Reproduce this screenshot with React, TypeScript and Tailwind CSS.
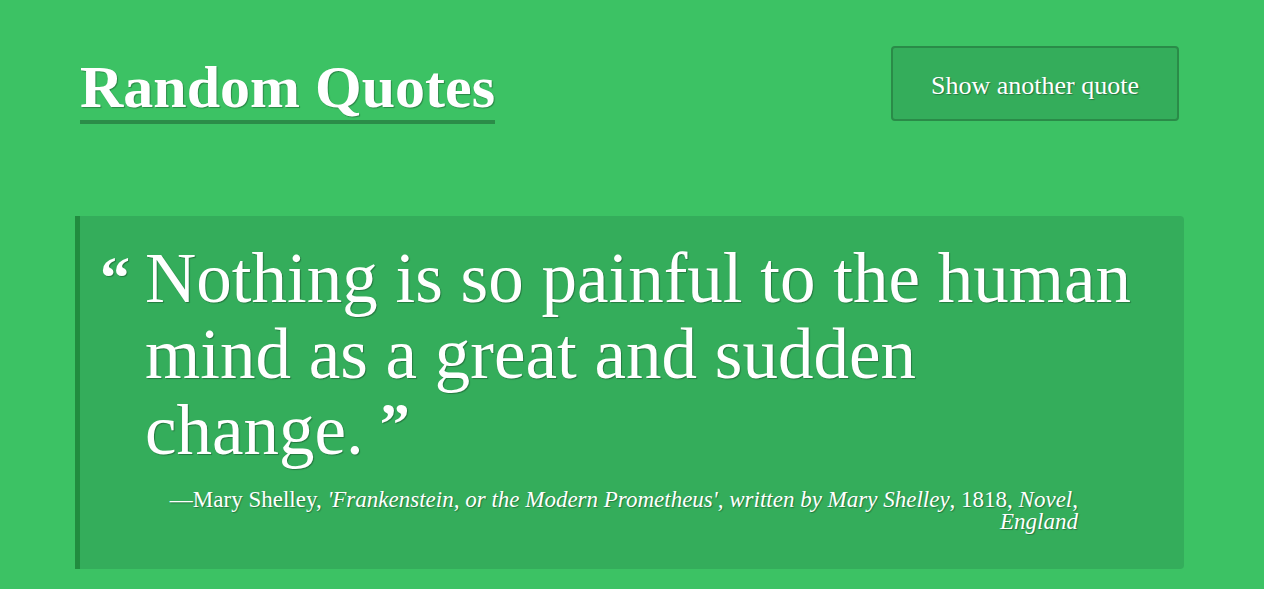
import React from 'react';

const serif = "font-['Liberation_Serif',serif]";
const shadow = '[text-shadow:1px_1px_1px_rgba(0,0,0,0.3)]';

export default function App() {
  return (
    <div className={`min-h-[589px] w-full bg-[#3cc264] text-white ${serif}`}>
      <div className="pl-[75px] pr-[80px] pt-[46px]">
        <header className="flex items-start justify-between">
          <h1
            className={`ml-[5px] mt-[8px] border-b-4 border-[#2b8c48] text-[60px] font-bold leading-[66px] ${shadow}`}
          >
            Random Quotes
          </h1>
          <button
            className={`mr-[5px] h-[75px] w-[288px] rounded border-2 border-[#2a8b48] bg-[#34ad5b] pt-[3px] text-[26px] ${shadow}`}
          >
            Show another quote
          </button>
        </header>

        <blockquote className="mt-[92px] rounded-r border-l-[5px] border-[#218c3f] bg-[#34ad5b] pb-[36px] pl-[20px] pr-[40px] pt-[24px]">
          <div className={`flex items-start ${shadow}`}>
            <span className="mt-[8px] w-[45px] shrink-0 text-[60px] font-bold leading-[60px]">“</span>
            <p className="text-[71px] leading-[76px]">
              Nothing is so painful to the human mind as a great and sudden change.
              <span className="ml-[16px] align-top text-[60px] font-bold leading-[64px]">”</span>
            </p>
          </div>
          <p className={`mt-[21px] pl-[40px] pr-[66px] text-right text-[23px] leading-[22px] ${shadow}`}>
            —Mary Shelley, <i>'Frankenstein, or the Modern Prometheus', written by Mary Shelley</i>, 1818,{' '}
            <i>Novel</i>, <i>England</i>
          </p>
        </blockquote>
      </div>
    </div>
  );
}
